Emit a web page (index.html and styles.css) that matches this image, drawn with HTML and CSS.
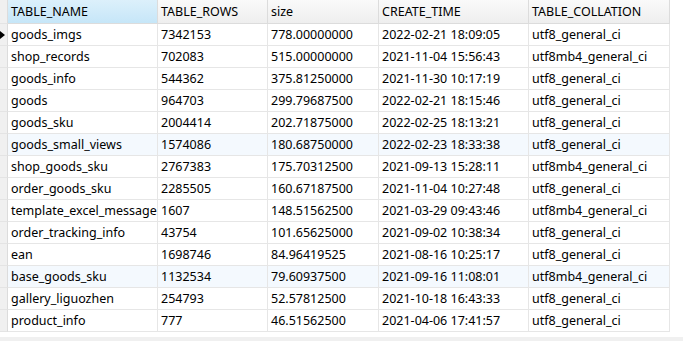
FILE: index.html
```html
<!DOCTYPE html>
<html lang="en">
<head>
    <meta charset="UTF-8">
    <meta name="viewport" content="width=device-width, initial-scale=1.0">
    <title>Tables</title>
    <link rel="stylesheet" href="styles.css">
</head>
<body>
    <div class="grid">
        <!-- Cabecera -->
        <div class="hd ind"></div>
        <div class="hd sorted">TABLE_NAME</div>
        <div class="hd">TABLE_ROWS</div>
        <div class="hd">size</div>
        <div class="hd">CREATE_TIME</div>
        <div class="hd">TABLE_COLLATION</div>

        <div class="ind"><span class="arrow"></span></div>
        <div class="c">goods_imgs</div><div class="c">7342153</div><div class="c">778.00000000</div><div class="c">2022-02-21 18:09:05</div><div class="c">utf8_general_ci</div>

        <div class="ind"></div>
        <div class="c">shop_records</div><div class="c">702083</div><div class="c">515.00000000</div><div class="c">2021-11-04 15:56:43</div><div class="c">utf8mb4_general_ci</div>

        <div class="ind"></div>
        <div class="c">goods_info</div><div class="c">544362</div><div class="c">375.81250000</div><div class="c">2021-11-30 10:17:19</div><div class="c">utf8_general_ci</div>

        <div class="ind"></div>
        <div class="c">goods</div><div class="c">964703</div><div class="c">299.79687500</div><div class="c">2022-02-21 18:15:46</div><div class="c">utf8_general_ci</div>

        <div class="ind"></div>
        <div class="c">goods_sku</div><div class="c">2004414</div><div class="c">202.71875000</div><div class="c">2022-02-25 18:13:21</div><div class="c">utf8_general_ci</div>

        <div class="ind"></div>
        <div class="c alt">goods_small_views</div><div class="c alt">1574086</div><div class="c alt">180.68750000</div><div class="c alt">2022-02-23 18:33:38</div><div class="c alt">utf8_general_ci</div>

        <div class="ind"></div>
        <div class="c">shop_goods_sku</div><div class="c">2767383</div><div class="c">175.70312500</div><div class="c">2021-09-13 15:28:11</div><div class="c">utf8mb4_general_ci</div>

        <div class="ind"></div>
        <div class="c">order_goods_sku</div><div class="c">2285505</div><div class="c">160.67187500</div><div class="c">2021-11-04 10:27:48</div><div class="c">utf8_general_ci</div>

        <div class="ind"></div>
        <div class="c">template_excel_message</div><div class="c">1607</div><div class="c">148.51562500</div><div class="c">2021-03-29 09:43:46</div><div class="c">utf8mb4_general_ci</div>

        <div class="ind"></div>
        <div class="c">order_tracking_info</div><div class="c">43754</div><div class="c">101.65625000</div><div class="c">2021-09-02 10:38:34</div><div class="c">utf8_general_ci</div>

        <div class="ind"></div>
        <div class="c">ean</div><div class="c">1698746</div><div class="c">84.96419525</div><div class="c">2021-08-16 10:25:17</div><div class="c">utf8_general_ci</div>

        <div class="ind"></div>
        <div class="c alt">base_goods_sku</div><div class="c alt">1132534</div><div class="c alt">79.60937500</div><div class="c alt">2021-09-16 11:08:01</div><div class="c alt">utf8mb4_general_ci</div>

        <div class="ind"></div>
        <div class="c">gallery_liguozhen</div><div class="c">254793</div><div class="c">52.57812500</div><div class="c">2021-10-18 16:43:33</div><div class="c">utf8_general_ci</div>

        <div class="ind"></div>
        <div class="c">product_info</div><div class="c">777</div><div class="c">46.51562500</div><div class="c">2021-04-06 17:41:57</div><div class="c">utf8_general_ci</div>
    </div>
    <div class="scrollbar"></div>
</body>
</html>
```

FILE: styles.css
```css
* {
    box-sizing: border-box;
    margin: 0;
    padding: 0;
}

body {
    font-family: 'Noto Sans', sans-serif;
    font-size: 12.5px;
    color: #000;
    background: #fff;
    width: 683px;
    height: 341px;
    overflow: hidden;
}

.grid {
    display: grid;
    grid-template-columns: 8px 150px 110px 111px 150px 141px;
    grid-template-rows: 24px;
    grid-auto-rows: 22px;
    width: 670px;
}

.grid > div {
    border-right: 1px solid #e6e6e6;
    border-bottom: 1px solid #e6e6e6;
    display: flex;
    align-items: center;
    padding-left: 3px;
    white-space: nowrap;
    overflow: hidden;
}

.grid > .hd {
    background: linear-gradient(#fafafa, #eeeeee);
    border-bottom: 1px solid #dcdcdc;
    border-right: 1px solid #dcdcdc;
}

.grid > .hd.sorted {
    background: linear-gradient(#dcf0fb, #c6e6f8);
}

.grid > .ind {
    background: #f0f0f0;
    border-right: 1px solid #dcdcdc;
    border-bottom: 1px solid #e4e4e4;
    padding-left: 0;
}

.grid > .c.alt {
    background: #f4f9fe;
}

.arrow {
    width: 0;
    height: 0;
    border-top: 4px solid transparent;
    border-bottom: 4px solid transparent;
    border-left: 5px solid #000;
}

.scrollbar {
    margin-top: 5px;
    height: 5px;
    background: #f0f0f0;
}
```
